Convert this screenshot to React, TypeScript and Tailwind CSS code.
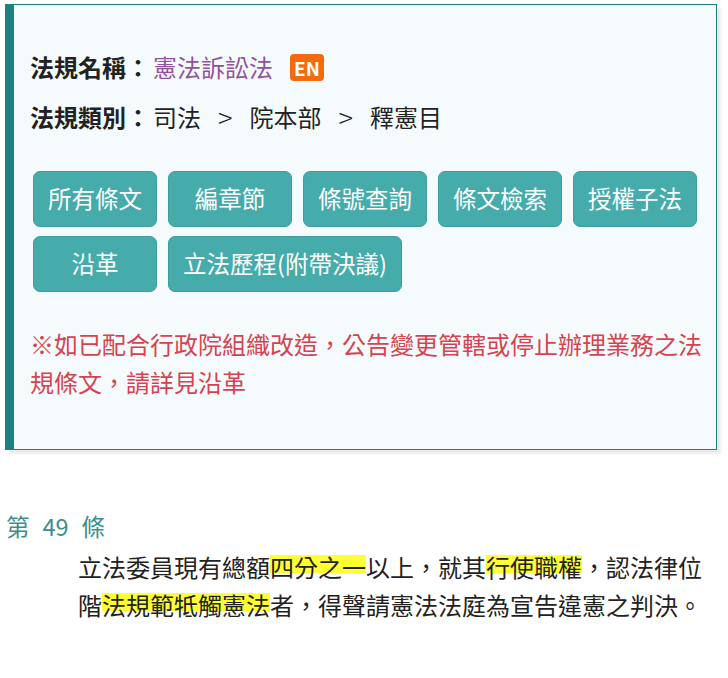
import React from "react";

const buttons = ["所有條文", "編章節", "條號查詢", "條文檢索", "授權子法", "沿革", "立法歷程(附帶決議)"];

function Hl({ children }: { children: React.ReactNode }) {
  return (
    <span className="bg-[linear-gradient(to_bottom,transparent_17%,#ffff33_17%,#ffff33_69%,transparent_69%)]">
      {children}
    </span>
  );
}

export default function App() {
  return (
    <div className="min-h-screen bg-white pl-[5px] pr-[11px] pt-[4px] font-['Noto_Sans_CJK_TC',sans-serif] text-[#222]">
      {/* law info panel */}
      <div className="border border-[#1b8080] border-l-[9px] bg-[#f5fbfc] pl-[16px] pr-[12px] pt-[37px] pb-[48px] shadow-[4px_4px_2px_rgba(0,0,0,0.08)]">
        <div className="flex items-center text-[24px] leading-[50px]">
          <span className="font-bold">法規名稱：</span>
          <span className="ml-[3px] text-[#93509f]">憲法訴訟法</span>
          <span className="ml-[17px] flex h-[27px] w-[34px] items-center justify-center rounded-[4px] bg-[#f46a0f] text-[19px] font-bold leading-none text-white">
            EN
          </span>
        </div>
        <div className="flex items-center text-[24px] leading-[50px]">
          <span className="font-bold">法規類別：</span>
          <span className="ml-[3px]">司法</span>
          <span className="mx-[17px] text-[27px] font-light">&gt;</span>
          <span>院本部</span>
          <span className="mx-[17px] text-[27px] font-light">&gt;</span>
          <span>釋憲目</span>
        </div>

        <div className="ml-[3px] mt-[29px] flex flex-wrap gap-x-[11px] gap-y-[9px]">
          {buttons.map((b) => (
            <button
              key={b}
              className="h-[56px] min-w-[124px] rounded-[7px] border border-[#3f9d9d] bg-[#46abab] px-[14px] text-[23.5px] text-white"
            >
              {b}
            </button>
          ))}
        </div>

        <p className="mt-[33px] text-[24px] leading-[38px] text-[#d6434f]">
          ※如已配合行政院組織改造，公告變更管轄或停止辦理業務之法規條文，請詳見沿革
        </p>
      </div>

      {/* article */}
      <div className="mt-[57px] pl-[1px]">
        <div className="text-[23.5px] leading-[38px] text-[#3a9090]">
          第<span className="mx-[13px]">49</span>條
        </div>
        <p className="ml-[72px] mt-[3px] max-w-[636px] text-[24px] leading-[38px] text-[#222]">
          立法委員現有總額<Hl>四分之一</Hl>以上，就其<Hl>行使職權</Hl>，認法律位階<Hl>法規範牴觸憲法</Hl>者，得聲請憲法法庭為宣告違憲之判決。
        </p>
      </div>
    </div>
  );
}
